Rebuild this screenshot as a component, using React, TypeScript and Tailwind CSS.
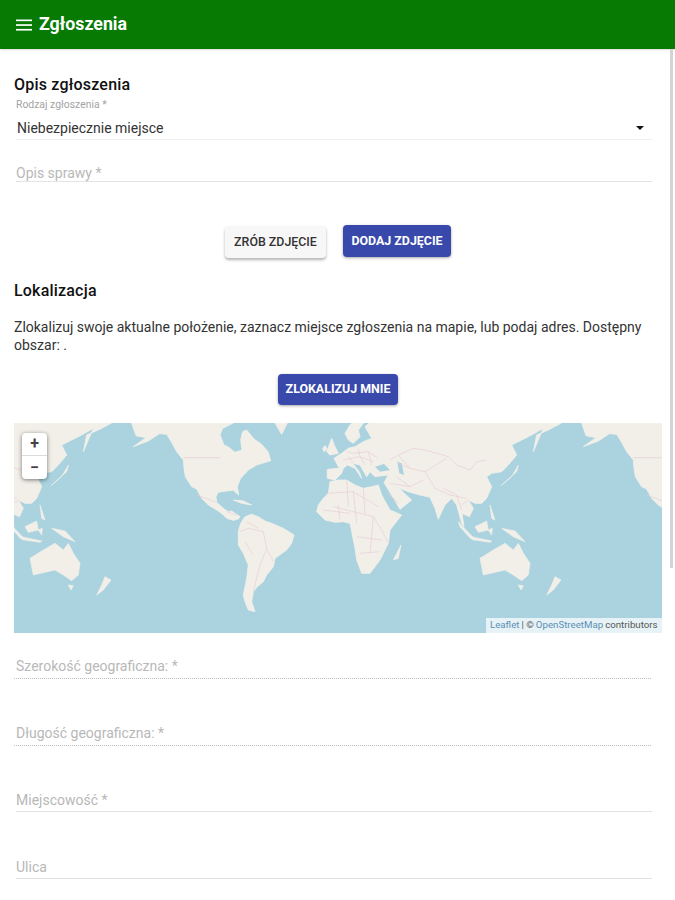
const font = "font-['Roboto',sans-serif]";

// all map shapes use one coordinate space, 3 units to a screen pixel
const WORLD_WIDTH = 1350;

const americas = [
  // north + central america
  "395,24 408,62 438,68 400,95 445,78 478,56 500,58 515,82 530,110 550,135 552,160 556,185 575,215 590,222 605,250 625,270 650,285 668,298 680,310 700,316 715,312 720,305 695,288 685,290 672,282 650,262 648,245 654,232 680,228 700,226 716,240 712,215 722,190 745,165 770,150 812,137 805,112 785,88 762,72 740,45 728,50 722,75 726,105 705,112 685,96 672,90 660,60 668,40 700,24",
  // south america
  "715,350 722,325 735,305 755,298 775,305 795,318 815,325 850,340 882,360 875,385 860,405 825,430 820,455 800,480 790,500 772,515 760,530 755,560 765,590 745,585 735,560 730,540 740,490 745,450 730,415 715,390",
  // greenland, cuba, hispaniola
  "825,24 862,24 845,58",
  "700,255 730,258 755,270 725,265",
];

// eurasia + africa, traced from the europe crop
const oldWorld = [
  "52,175 75,180 95,160 100,145 112,135 135,145 155,175 148,155 128,130 150,135 170,170 180,155 195,170 235,165 222,188 245,225 270,268 305,240 285,222 268,205 295,215 330,225 360,232 375,265 385,298 395,275 405,255 425,235 440,255 455,310 462,320 456,280 478,290 490,265 475,240 495,250 515,250 530,235 545,200 530,170 545,160 575,155 595,135 620,105 605,75 635,60 665,45 700,25 670,95 680,45 715,30 755,9 755,-10 200,-10 165,20 185,55 160,65 135,80 115,85 95,100 72,115 88,145 52,148",
  "105,40 120,15 150,-10 175,-10 145,30 150,50 130,70 115,60",
  "50,95 65,55 75,80 85,100 60,105",
  "38,85 46,76 50,88 42,95",
  "60,185 85,180 110,180 135,195 160,205 185,200 205,195 215,225 240,270 275,285 240,330 235,370 210,420 180,460 155,460 140,420 135,385 120,310 100,305 75,307 45,300 20,275 25,255 40,235 55,220",
];

const islands = [
  // madagascar
  "175,435 198,390 190,430",
  // sumatra, java, borneo, philippines
  "370,320 415,368 408,372 375,335",
  "408,365 470,378 465,382 412,374",
  "420,335 455,318 460,345 430,352",
  "465,270 480,315 470,310",
  // sulawesi
  "460,345 472,340 470,360",
  // new guinea
  "500,340 540,348 570,380 535,365",
  // japan
  "498,212 545,170 550,150 530,185",
  // australia, tasmania, new zealand
  "435,430 475,405 510,385 535,405 550,385 565,415 585,445 580,480 560,497 535,480 510,465 445,480",
  "550,510 565,512 558,525",
  "660,485 678,495 655,525 635,540 650,510",
];

const waters = ["195,140 222,132 240,150 210,155", "262,125 275,130 282,165 268,160"];

const americaBorders =
  "M550,128 L660,128 M590,240 L650,262 M680,290 L710,300 M745,340 L790,350 L800,400 L780,450 L760,530 M735,380 L760,420 M800,400 L820,440 M740,320 L775,340 M720,350 L745,340";

const oldWorldBorders =
  "M100,120 L150,110 L190,125 M130,100 L175,95 L205,115 M115,110 L130,130 M150,110 L165,135 M175,95 L185,135 M110,95 L130,100 M145,85 L150,110 M240,120 L265,105 L310,85 L345,90 L415,110 L440,135 L480,150 L500,125 L530,120 M265,130 L300,145 L345,155 L410,115 M345,155 L375,205 L420,225 L470,235 M260,170 L300,200 L340,180 M300,145 L265,105 M400,205 L440,225 L455,270 M475,240 L455,255 M50,220 L130,215 L205,260 M130,215 L140,310 M70,260 L190,290 L215,330 M190,290 L180,400 M40,270 L120,280 M140,350 L215,360 M150,400 L210,395 M110,180 L115,260 M160,205 L165,280 M240,190 L300,200 M230,215 L265,250 M85,255 L90,300 M215,330 L235,370";

function WorldCopy({ dx }: { dx: number }) {
  return (
    <g transform={`translate(${dx} 0)`}>
      <g fill="#f2efe9" stroke="#f2efe9" strokeWidth="2.5" strokeLinejoin="round">
        {americas.map((p) => (
          <polygon key={p} points={p} />
        ))}
      </g>
      <path d={americaBorders} fill="none" stroke="#e8ccd4" strokeWidth="2" />
      <g transform="translate(930 15)">
        <g fill="#f2efe9" stroke="#f2efe9" strokeWidth="2.5" strokeLinejoin="round">
          {oldWorld.map((p) => (
            <polygon key={p} points={p} />
          ))}
        </g>
        {waters.map((p) => (
          <polygon key={p} points={p} fill="#aad3df" />
        ))}
        <path d={oldWorldBorders} fill="none" stroke="#e8ccd4" strokeWidth="2" />
      </g>
      <g transform="translate(1005 0)" fill="#f2efe9" stroke="#f2efe9" strokeWidth="2" strokeLinejoin="round">
        {islands.map((p) => (
          <polygon key={p} points={p} />
        ))}
      </g>
    </g>
  );
}

function Field({ label, height, dotted, className }: { label: string; height: string; dotted?: boolean; className: string }) {
  return (
    <div className={className}>
      <div
        className={
          dotted
            ? `${height} border-b border-dotted border-[#bdbdbd] pl-[2px] text-[14px] text-[#b8b8b8]`
            : `${height} ml-[2px] border-b border-[#e3e3e3] text-[14px] text-[#b8b8b8]`
        }
      >
        {label}
      </div>
    </div>
  );
}

export default function App() {
  return (
    <div className={`relative h-[900px] w-[675px] overflow-hidden bg-white ${font}`}>
      <header className="flex h-[49px] items-center gap-[7px] bg-[#067a03] pl-[16px] text-white shadow-sm">
        <svg viewBox="0 0 16 12" className="h-3 w-4 fill-white">
          <rect y="0.5" width="16" height="1.7" />
          <rect y="5.2" width="16" height="1.7" />
          <rect y="9.9" width="16" height="1.7" />
        </svg>
        <span className="text-[17.8px] font-bold">Zgłoszenia</span>
      </header>

      {/* scrollbar */}
      <div className="absolute right-[2px] top-[49px] h-[519px] w-[3px] bg-[#d4d4d4]" />

      <main className="flex w-[662px] flex-col pl-[14px]">
        <h2 className="mt-[26px] text-[16px] font-medium leading-5 tracking-[0.2px] text-[#111]">Opis zgłoszenia</h2>

        <div className="ml-[2px] mt-[4px] h-3 text-[10.4px] leading-3 text-[#a3a3a3]">Rodzaj zgłoszenia *</div>
        <div className="ml-[2px] mt-[7px] flex h-[22px] w-[636px] items-start justify-between border-b border-[#f0f0f0] pl-[1px] pr-[8px]">
          <span className="text-[14px] leading-5 text-[#333]">Niebezpiecznie miejsce</span>
          <span className="mt-[8px] h-0 w-0 border-x-[4px] border-t-[4px] border-x-transparent border-t-[#111]" />
        </div>

        <Field label="Opis sprawy *" height="h-[19px] leading-[21px]" className="mt-[23px] w-[638px]" />

        <div className="ml-[211px] mt-[43px] flex items-start gap-[17px]">
          <button className="mt-[1px] h-8 w-[101px] rounded bg-[#f7f7f7] text-[12.4px] font-medium text-[#333] shadow-[0_2px_3px_rgba(0,0,0,0.3)]">
            ZRÓB ZDJĘCIE
          </button>
          <button className="h-8 w-[108px] rounded bg-[#3949ab] text-[12.4px] font-bold text-white shadow-[0_1px_3px_rgba(0,0,0,0.35)]">
            DODAJ ZDJĘCIE
          </button>
        </div>

        <h2 className="mt-[23px] text-[16px] font-medium leading-5 tracking-[0.2px] text-[#111]">Lokalizacja</h2>

        <p className="mt-[17px] w-[648px] text-[14px] leading-[18px] text-[#333]">
          Zlokalizuj swoje aktualne położenie, zaznacz miejsce zgłoszenia na mapie, lub podaj adres. Dostępny obszar: .
        </p>

        <button className="ml-[264px] mt-[20px] h-[31px] w-[120px] rounded bg-[#3949ab] text-[12.4px] font-bold text-white shadow-[0_1px_3px_rgba(0,0,0,0.35)]">
          ZLOKALIZUJ MNIE
        </button>

        {/* map */}
        <div className="relative mt-[18px] h-[210px] w-[648px] overflow-hidden bg-[#aad3df]">
          <svg viewBox="42 24 1944 630" className="block h-full w-full blur-[0.5px]">
            <WorldCopy dx={-WORLD_WIDTH} />
            <WorldCopy dx={0} />
            <WorldCopy dx={WORLD_WIDTH} />
          </svg>
          <div className="absolute left-[8px] top-[10px] flex h-[46px] w-[25px] flex-col rounded bg-white text-[#444] shadow-[0_1px_4px_rgba(0,0,0,0.5)]">
            <div className="flex h-[23px] items-center justify-center border-b border-[#dcdcdc] text-[16px] font-bold leading-none">
              +
            </div>
            <div className="flex flex-1 items-center justify-center text-[16px] font-bold leading-none">−</div>
          </div>
          <div className="absolute bottom-0 right-0 flex h-[15px] w-[176px] items-center whitespace-nowrap bg-white/70 pl-[4px] text-[9.7px] text-[#555]">
            <span className="text-[#5b8fb5]">Leaflet</span>
            <span className="mx-[2px]">| ©</span>
            <span className="text-[#5b8fb5]">OpenStreetMap</span>
            <span className="ml-[2px]">contributors</span>
          </div>
        </div>

        <Field label="Szerokość geograficzna: *" height="h-[22px] leading-[19px]" dotted className="mt-[24px] w-[637px]" />
        <Field label="Długość geograficzna: *" height="h-[22px] leading-[19px]" dotted className="mt-[45px] w-[637px]" />
        <Field label="Miejscowość *" height="h-[21px] leading-[19px]" className="mt-[45px] w-[638px]" />
        <Field label="Ulica" height="h-[21px] leading-[19px]" className="mt-[46px] w-[638px]" />
      </main>
    </div>
  );
}
